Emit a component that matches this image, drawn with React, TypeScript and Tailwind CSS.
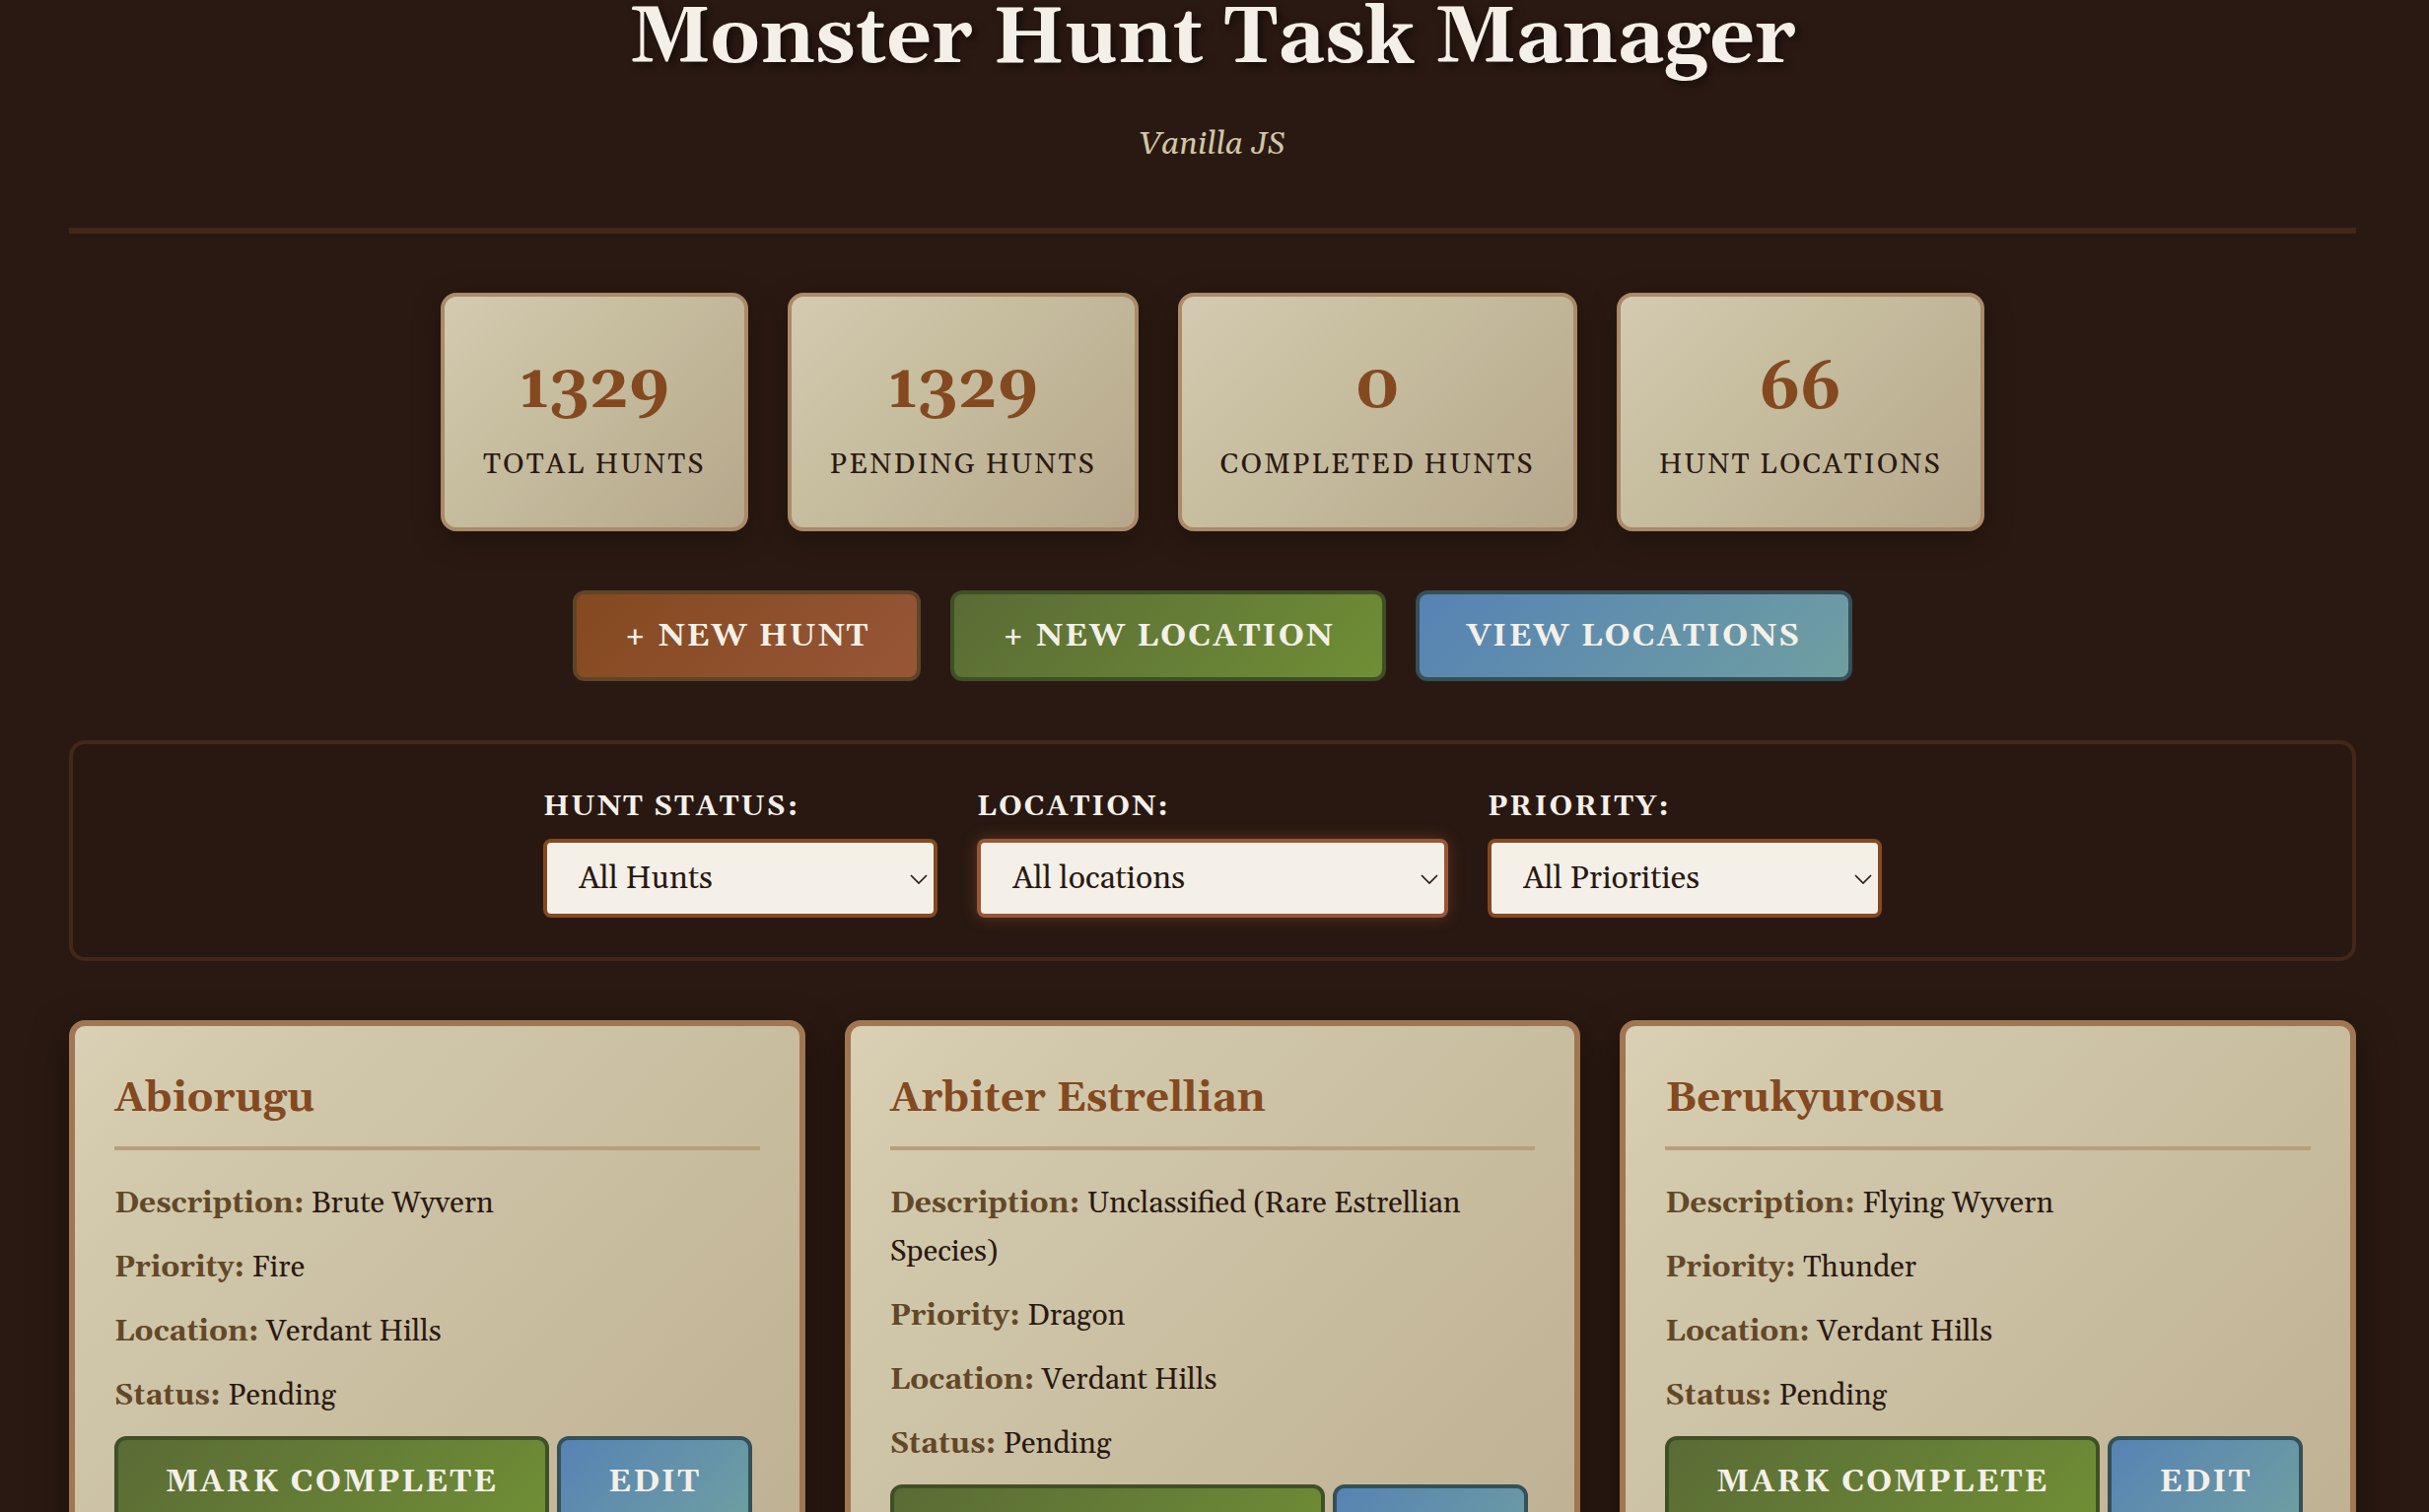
import React from "react";

const stats = [
  { label: "Total Hunts", value: "1329" },
  { label: "Pending Hunts", value: "1329" },
  { label: "Completed Hunts", value: "0" },
  { label: "Hunt Locations", value: "66" },
];

const filters = [
  { id: "status", label: "Hunt Status:", value: "All Hunts", width: "w-[400px]", active: false },
  { id: "location", label: "Location:", value: "All locations", width: "w-[478px]", active: true },
  { id: "priority", label: "Priority:", value: "All Priorities", width: "w-[400px]", active: false },
];

const hunts = [
  { name: "Abiorugu", description: "Brute Wyvern", priority: "Fire", location: "Verdant Hills", status: "Pending" },
  {
    name: "Arbiter Estrellian",
    description: "Unclassified (Rare Estrellian Species)",
    priority: "Dragon",
    location: "Verdant Hills",
    status: "Pending",
  },
  { name: "Berukyurosu", description: "Flying Wyvern", priority: "Thunder", location: "Verdant Hills", status: "Pending" },
];

const tones = {
  rust: "border-[#5f4427] bg-linear-135 from-[#84491f] to-[#985637]",
  green: "border-[#405026] bg-linear-135 from-[#596b35] to-[#708f35]",
  blue: "border-[#355057] bg-linear-135 from-[#5682b4] to-[#709fa0]",
};

function ActionButton({ tone, children }: { tone: keyof typeof tones; children: React.ReactNode }) {
  return (
    <button
      type="button"
      className={`rounded-xl border-4 bg-origin-border px-12 pt-[25px] pb-[23px] text-[32px] leading-9 font-bold tracking-[2px] whitespace-nowrap text-[#f4f0e8] uppercase ${tones[tone]}`}
    >
      {children}
    </button>
  );
}

function StatCard({ label, value }: { label: string; value: string }) {
  return (
    <div className="rounded-2xl border-4 border-[#ab8a69] bg-linear-135 from-[#d4cab1] via-[#c8bfa1] via-35% to-[#b6a78b] px-[39px] py-10 text-center shadow-[0_8px_30px_rgba(0,0,0,0.3)]">
      <div className="text-[64px] leading-[108px] font-bold text-[#84491f]">{value}</div>
      <div className="text-[29px] leading-[46px] tracking-[2px] uppercase">{label}</div>
    </div>
  );
}

function FilterSelect({ id, label, value, width, active }: (typeof filters)[number]) {
  return (
    <div className="flex flex-col gap-2">
      <label htmlFor={id} className="text-[29px] leading-[48px] font-bold tracking-[2px] text-[#f4f0e8] uppercase">
        {label}
      </label>
      <div className={`relative ${width}`}>
        <select
          id={id}
          defaultValue={value}
          className={`h-20 w-full appearance-none rounded-lg border-4 bg-[#f4f0e8] px-8 pt-0.5 text-[32px] leading-9 outline-none ${
            active ? "border-[#985637] shadow-[0_0_16px_rgba(152,86,55,0.45)]" : "border-[#84491f]"
          }`}
        >
          <option>{value}</option>
        </select>
        <svg
          aria-hidden="true"
          viewBox="0 0 18 10"
          className="pointer-events-none absolute top-9 right-2.5 h-2.5 w-[18px] fill-none stroke-[#2a1912] stroke-[1.7]"
        >
          <path d="M1 1l8 8 8-8" />
        </svg>
      </div>
    </div>
  );
}

function Detail({ label, children }: { label: string; children: React.ReactNode }) {
  return (
    <p className="mb-4">
      <strong className="text-[#634729]">{label}:</strong> {children}
    </p>
  );
}

function HuntCard({ hunt }: { hunt: (typeof hunts)[number] }) {
  return (
    <article className="rounded-2xl border-[6px] border-[#a17652] bg-linear-135 from-[#d9d0b5] via-[#d1c8ab] via-20% to-[#beaf91] p-10 text-[30px] leading-[49px] shadow-[0_12px_40px_rgba(0,0,0,0.4)]">
      <h3 className="mb-[30px] border-b-4 border-[#b99e7b] pb-3.5 text-[42px] leading-[68px] font-bold text-[#84491f]">
        {hunt.name}
      </h3>
      <Detail label="Description">{hunt.description}</Detail>
      <Detail label="Priority">{hunt.priority}</Detail>
      <Detail label="Location">{hunt.location}</Detail>
      <Detail label="Status">{hunt.status}</Detail>
      <div className="flex flex-wrap gap-2">
        <ActionButton tone="green">Mark Complete</ActionButton>
        <ActionButton tone="blue">Edit</ActionButton>
      </div>
    </article>
  );
}

export default function App() {
  return (
    <div className="min-h-screen bg-[#2a1912] pr-1 font-[Gelasio,Georgia,'Liberation_Serif',serif] text-[#2a1912]">
      <div className="mx-auto flex max-w-[2400px] flex-col gap-[60px] px-10 pb-10">
        <header className="border-b-[6px] border-[#442718] pb-[58px] text-center">
          <h1 className="mb-10 text-[80px] leading-[80px] font-bold text-[#f4f0e8] [text-shadow:4px_4px_8px_rgba(0,0,0,0.5)]">
            Monster Hunt Task Manager
          </h1>
          <p className="text-[32px] leading-[53px] text-[#d3c5a5] italic">Vanilla JS</p>
        </header>

        <section aria-label="Statistics" className="flex flex-wrap justify-center gap-10">
          {stats.map((s) => (
            <StatCard key={s.label} {...s} />
          ))}
        </section>

        <nav aria-label="Actions" className="flex flex-wrap justify-center gap-[30px]">
          <ActionButton tone="rust">+ New Hunt</ActionButton>
          <ActionButton tone="green">+ New Location</ActionButton>
          <ActionButton tone="blue">View Locations</ActionButton>
        </nav>

        <form className="flex flex-wrap justify-center gap-10 rounded-2xl border-4 border-[#442718] bg-[#281811] p-10">
          {filters.map((f) => (
            <FilterSelect key={f.id} {...f} />
          ))}
        </form>

        <main className="grid grid-cols-3 gap-10">
          {hunts.map((h) => (
            <HuntCard key={h.name} hunt={h} />
          ))}
        </main>
      </div>
    </div>
  );
}
